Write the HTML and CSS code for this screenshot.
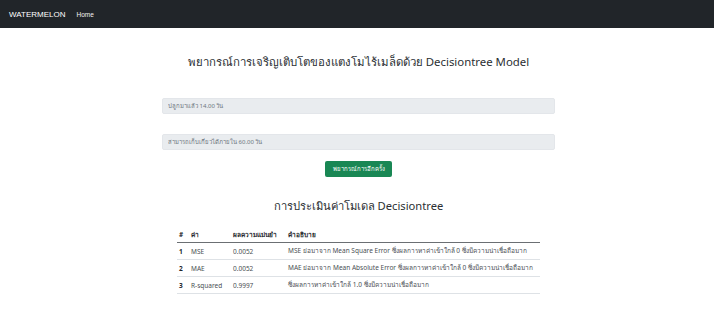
FILE: index.html
```html
<!DOCTYPE html>
<html lang="th">
<head>
  <meta charset="UTF-8" />
  <title>Watermelon</title>
  <link rel="stylesheet" href="styles.css">
</head>
<body>
  <nav class="navbar">
    <a class="brand" href="#">WATERMELON</a>
    <a class="nav-link" href="#">Home</a>
  </nav>

  <div class="main">
    <h3 class="title">พยากรณ์การเจริญเติบโตของแตงโมไร้เมล็ดด้วย Decisiontree Model</h3>

    <input type="text" class="field first" placeholder="ปลูกมาแล้ว 14.00 วัน" disabled />
    <input type="text" class="field" placeholder="สามารถเก็บเกี่ยวได้ภายใน 60.00 วัน" disabled />

    <div class="btn-row">
      <button class="btn-predict">พยากรณ์การอีกครั้ง</button>
    </div>

    <h4 class="subtitle">การประเมินค่าโมเดล Decisiontree</h4>

    <table class="score-table">
      <thead>
        <tr><th class="c-no">#</th><th class="c-name">ค่า</th><th class="c-val">ผลความแม่นยำ</th><th>คำอธิบาย</th></tr>
      </thead>
      <tbody>
        <tr><td class="num">1</td><td>MSE</td><td>0.0052</td><td>MSE ย่อมาจาก Mean Square Error ซึ่งผลการหาค่าเข้าใกล้ 0 ซึ่งมีความน่าเชื่อถือมาก</td></tr>
        <tr><td class="num">2</td><td>MAE</td><td>0.0052</td><td>MAE ย่อมาจาก Mean Absolute Error ซึ่งผลการหาค่าเข้าใกล้ 0 ซึ่งมีความน่าเชื่อถือมาก</td></tr>
        <tr><td class="num">3</td><td>R-squared</td><td>0.9997</td><td>ซึ่งผลการหาค่าเข้าใกล้ 1.0 ซึ่งมีความน่าเชื่อถือมาก</td></tr>
      </tbody>
    </table>
  </div>
</body>
</html>
```

FILE: styles.css
```css
body {
  margin: 0;
  font-family: 'Noto Sans', 'DejaVu Sans', sans-serif;
  background: #fff;
  color: #212529;
}
.navbar {
  height: 28px;
  background: #212529;
  display: flex;
  align-items: center;
  padding: 0 9px;
  gap: 11px;
}
.brand {
  color: #fff;
  font-family: 'Liberation Sans', Arial, sans-serif;
  font-size: 8px;
  text-decoration: none;
}
.nav-link {
  color: #f2f2f2;
  font-family: 'Liberation Sans', Arial, sans-serif;
  font-size: 6.5px;
  text-decoration: none;
}
.main {
  width: 393px;
  margin: 0 auto;
  padding-left: 3px;
  display: flex;
  flex-direction: column;
}
.title {
  margin: 24px 0 0;
  height: 20px;
  line-height: 20px;
  font-size: 11.4px;
  font-weight: 400;
  text-align: center;
  white-space: nowrap;
  color: #2b2f33;
}
.field {
  display: block;
  box-sizing: border-box;
  width: 393px;
  height: 16px;
  margin: 20px 0 0;
  padding: 0 5px;
  border: 1px solid #e3e6ea;
  border-radius: 2px;
  background: #e9ecef;
  font-family: inherit;
  font-size: 6px;
}
.field.first { margin-top: 26px; }
.field::placeholder { color: #6c757d; }
.btn-row {
  display: flex;
  justify-content: center;
  margin-top: 11px;
}
.btn-predict {
  width: 67px;
  height: 16px;
  padding: 0;
  background: #198754;
  border: none;
  border-radius: 2px;
  color: #fff;
  font-family: inherit;
  font-size: 6px;
}
.subtitle {
  margin: 20px 0 0;
  height: 18px;
  line-height: 18px;
  font-size: 11.2px;
  font-weight: 400;
  text-align: center;
  color: #2b2f33;
}
.score-table {
  width: 363px;
  margin: 12px 0 0 15px;
  border-collapse: collapse;
  font-size: 6.5px;
}
.score-table th {
  height: 15px;
  text-align: left;
  font-weight: 700;
  padding: 0 2px;
  border-bottom: 1px solid #6b6f73;
}
.score-table td {
  height: 16px;
  padding: 0 2px;
  border-bottom: 1px solid #dee2e6;
  color: #4a4f54;
  white-space: nowrap;
}
.score-table td.num { font-weight: 700; color: #212529; }
.c-no { width: 8px; }
.c-name { width: 38px; }
.c-val { width: 51px; }
```
